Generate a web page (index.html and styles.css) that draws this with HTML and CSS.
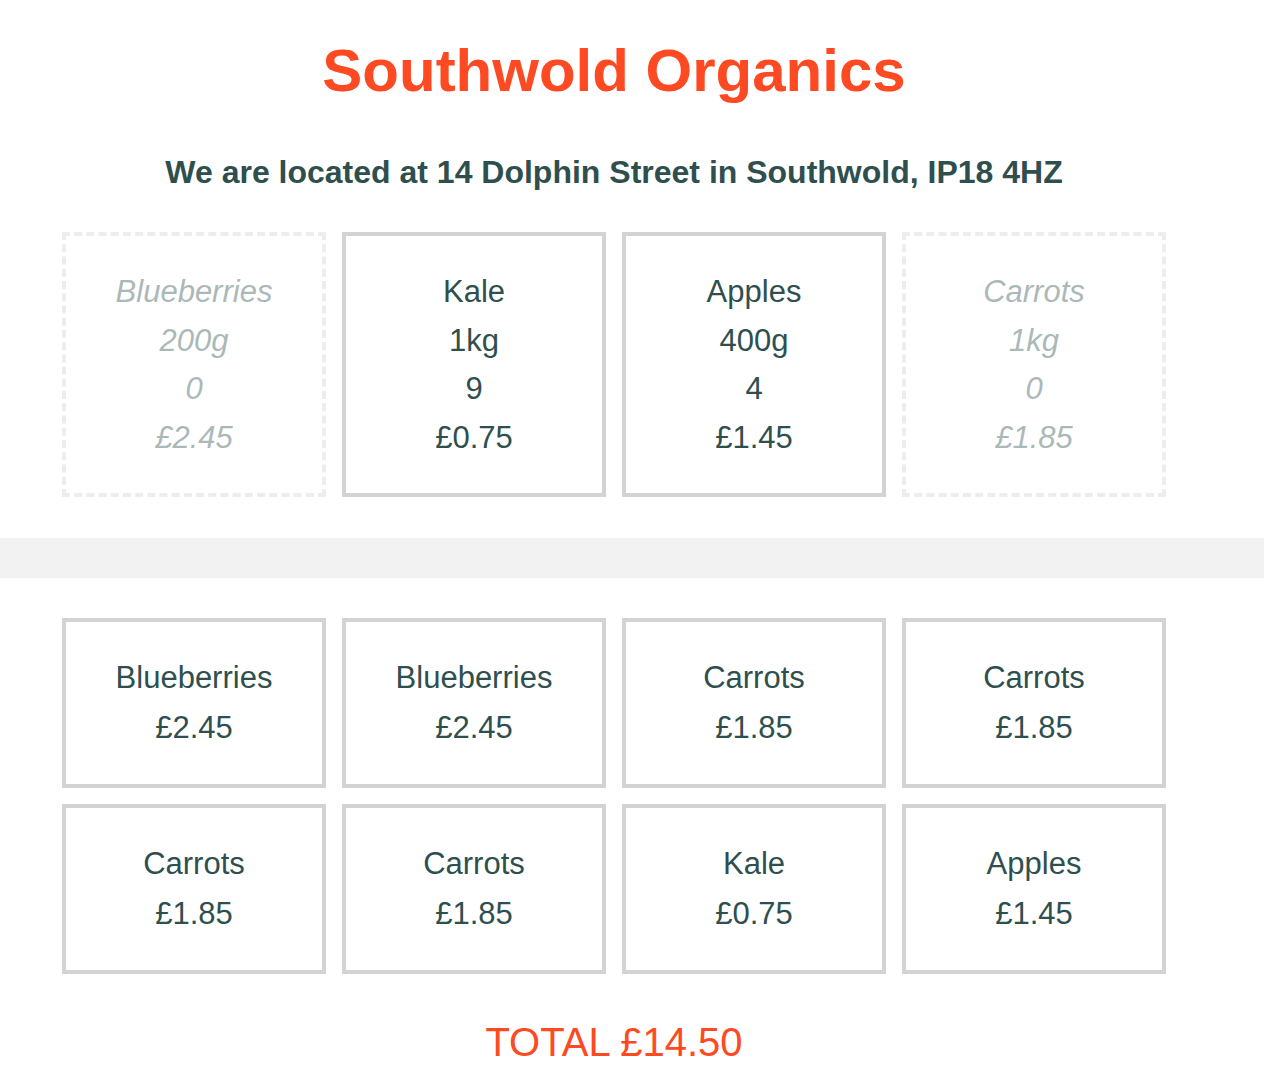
FILE: index.html
```html
<!DOCTYPE html>
<html lang="en">
<head>
<meta charset="utf-8">
<title>Southwold Organics</title>
<link rel="stylesheet" href="styles.css">
</head>
<body>
  <header class="header">
    <h1 class="title">Southwold Organics</h1>
    <h2 class="subtitle">We are located at 14 Dolphin Street in Southwold, IP18 4HZ</h2>
  </header>

  <section class="grid products">
    <div class="card card--out">
      <div class="line">Blueberries</div>
      <div class="line">200g</div>
      <div class="line">0</div>
      <div class="line">£2.45</div>
    </div>
    <div class="card">
      <div class="line">Kale</div>
      <div class="line">1kg</div>
      <div class="line">9</div>
      <div class="line">£0.75</div>
    </div>
    <div class="card">
      <div class="line">Apples</div>
      <div class="line">400g</div>
      <div class="line">4</div>
      <div class="line">£1.45</div>
    </div>
    <div class="card card--out">
      <div class="line">Carrots</div>
      <div class="line">1kg</div>
      <div class="line">0</div>
      <div class="line">£1.85</div>
    </div>
  </section>

  <div class="divider"></div>

  <section class="grid basket">
    <div class="card card--basket"><div class="line">Blueberries</div><div class="line">£2.45</div></div>
    <div class="card card--basket"><div class="line">Blueberries</div><div class="line">£2.45</div></div>
    <div class="card card--basket"><div class="line">Carrots</div><div class="line">£1.85</div></div>
    <div class="card card--basket"><div class="line">Carrots</div><div class="line">£1.85</div></div>
    <div class="card card--basket"><div class="line">Carrots</div><div class="line">£1.85</div></div>
    <div class="card card--basket"><div class="line">Carrots</div><div class="line">£1.85</div></div>
    <div class="card card--basket"><div class="line">Kale</div><div class="line">£0.75</div></div>
    <div class="card card--basket"><div class="line">Apples</div><div class="line">£1.45</div></div>
  </section>

  <p class="total">TOTAL £14.50</p>
</body>
</html>
```

FILE: styles.css
```css
* {
  box-sizing: border-box;
}

body {
  margin: 0;
  background: #ffffff;
  color: #2f4f4f;
  font-family: "Liberation Sans", Arial, Helvetica, sans-serif;
}

.header {
  width: 1228px;
  padding-top: 36px;
  text-align: center;
}

.title {
  margin: 0;
  font-size: 60px;
  line-height: 70px;
  font-weight: 700;
  color: #fd4a22;
}

.subtitle {
  margin: 48px 0 0;
  font-size: 32px;
  line-height: 36px;
  font-weight: 700;
  color: #2f4f4f;
}

.grid {
  width: 1228px;
  padding: 0 62px;
  display: grid;
  grid-template-columns: repeat(4, 264px);
  gap: 16px;
}

.products {
  margin-top: 42px;
}

.card {
  border: 4px solid #d3d3d3;
  height: 265px;
  padding-top: 32px;
  text-align: center;
  font-size: 31px;
  line-height: 48.67px;
  color: #2f4f4f;
}

.card--out {
  border-style: dashed;
  font-style: italic;
  opacity: 0.4;
}

.card--basket {
  height: 170px;
  padding-top: 31px;
  line-height: 49.5px;
}

.divider {
  height: 40px;
  margin-top: 41px;
  background: #f2f2f2;
}

.basket {
  margin-top: 40px;
}

.total {
  width: 1228px;
  margin: 45px 0 0;
  text-align: center;
  font-size: 40px;
  line-height: 46px;
  color: #fd4a22;
}
```
